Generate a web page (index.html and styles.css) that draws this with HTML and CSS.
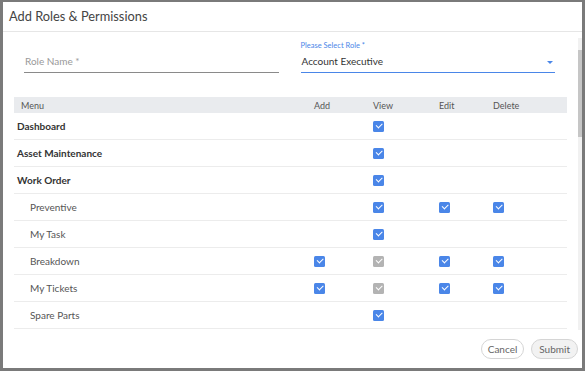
FILE: index.html
```html
<!DOCTYPE html>
<html>
<head>
<meta charset="utf-8">
<link rel="stylesheet" href="styles.css">
</head>
<body>
<div class="dialog">
  <div class="head">Add Roles &amp; Permissions</div>
  <div class="body">
    <div class="content">
      <div class="fields">
        <div class="field">
          <div class="float-label">&nbsp;</div>
          <div class="input">Role Name *</div>
        </div>
        <div class="field select">
          <div class="float-label blue">Please Select Role *</div>
          <div class="input value">Account Executive<span class="arrow"></span></div>
        </div>
      </div>
      <div class="table">
        <div class="row header">
          <div class="c menu">Menu</div><div class="c">Add</div><div class="c">View</div><div class="c">Edit</div><div class="c">Delete</div>
        </div>
        <div class="row">
          <div class="c menu strong">Dashboard</div><div class="c"></div><div class="c"><span class="cb"></span></div><div class="c"></div><div class="c"></div>
        </div>
        <div class="row">
          <div class="c menu strong">Asset Maintenance</div><div class="c"></div><div class="c"><span class="cb"></span></div><div class="c"></div><div class="c"></div>
        </div>
        <div class="row">
          <div class="c menu strong">Work Order</div><div class="c"></div><div class="c"><span class="cb"></span></div><div class="c"></div><div class="c"></div>
        </div>
        <div class="row">
          <div class="c menu sub">Preventive</div><div class="c"></div><div class="c"><span class="cb"></span></div><div class="c"><span class="cb"></span></div><div class="c"><span class="cb"></span></div>
        </div>
        <div class="row">
          <div class="c menu sub">My Task</div><div class="c"></div><div class="c"><span class="cb"></span></div><div class="c"></div><div class="c"></div>
        </div>
        <div class="row">
          <div class="c menu sub">Breakdown</div><div class="c"><span class="cb"></span></div><div class="c"><span class="cb off"></span></div><div class="c"><span class="cb"></span></div><div class="c"><span class="cb"></span></div>
        </div>
        <div class="row">
          <div class="c menu sub">My Tickets</div><div class="c"><span class="cb"></span></div><div class="c"><span class="cb off"></span></div><div class="c"><span class="cb"></span></div><div class="c"><span class="cb"></span></div>
        </div>
        <div class="row">
          <div class="c menu sub">Spare Parts</div><div class="c"></div><div class="c"><span class="cb"></span></div><div class="c"></div><div class="c"></div>
        </div>
      </div>
    </div>
    <div class="scroll"><div class="thumb"></div></div>
  </div>
  <div class="foot">
    <button class="btn">Cancel</button>
    <button class="btn submit">Submit</button>
  </div>
</div>
</body>
</html>
```

FILE: styles.css
```css
* { box-sizing: border-box; }
html, body { margin: 0; padding: 0; background: #fff; }
body { font-family: Lato, "Open Sans", sans-serif; color: #333; }

.dialog {
  width: 585px;
  height: 371px;
  border-style: solid;
  border-color: #7a7a7a;
  border-width: 2px 3px 3px 3px;
  display: flex;
  flex-direction: column;
  background: #fff;
}

.head {
  height: 30px;
  flex: none;
  padding: 0 0 0 6px;
  font-size: 12.8px;
  color: #444;
  line-height: 28px;
  border-bottom: 1px solid #e6e6e6;
}

.body {
  flex: 1;
  display: flex;
  min-height: 0;
}

.content {
  flex: 1;
  padding: 0 11px 0 11px;
}

.fields {
  display: flex;
  gap: 22px;
  padding: 9px 12px 0 10px;
}
.field { flex: 1; }
.float-label {
  font-size: 7.5px;
  height: 10px;
  line-height: 10px;
  color: #999;
}
.float-label.blue { color: #4a86e8; }
.input {
  position: relative;
  height: 22px;
  line-height: 20px;
  font-size: 10px;
  color: #999;
  border-bottom: 1px solid #8a8a8a;
  padding-left: 1px;
}
.input.value {
  color: #333;
  border-bottom: 1.5px solid #4a86e8;
}
.arrow {
  position: absolute;
  right: 2px;
  top: 10px;
  width: 0;
  height: 0;
  border-left: 3px solid transparent;
  border-right: 3px solid transparent;
  border-top: 3px solid #4a86e8;
}

.table { margin-top: 24px; }
.row {
  display: grid;
  grid-template-columns: 299px 59px 66px 54px 74px;
  height: 27px;
  border-bottom: 1px solid #ececec;
  align-items: center;
  font-size: 10px;
}
.row.header {
  height: 16px;
  background: #e9ebee;
  border-bottom: none;
  font-size: 9px;
  color: #555;
}
.c { padding-left: 1px; display: flex; align-items: center; }
.c.menu { padding-left: 6px; }
.header .c.menu { padding-left: 7px; }
.c.menu.strong { font-weight: 700; color: #333; padding-left: 3px; }
.c.menu.sub { padding-left: 16px; color: #555; }

.cb {
  display: inline-block;
  width: 11px;
  height: 11px;
  border-radius: 1.5px;
  background: #4a86e8;
  position: relative;
}
.cb.off { background: #b3b3b3; }
.cb::after {
  content: "";
  position: absolute;
  left: 3px;
  top: 2.5px;
  width: 5px;
  height: 2.5px;
  border-left: 1.2px solid #fff;
  border-bottom: 1.2px solid #fff;
  transform: rotate(-45deg);
}

.scroll {
  width: 4px;
  margin: 6px 0 0 0;
  background: #f1f1f1;
  flex: none;
}
.thumb {
  margin-top: 12px;
  height: 87px;
  background: #c6c6c6;
}

.foot {
  height: 38px;
  flex: none;
  display: flex;
  justify-content: flex-end;
  align-items: center;
  gap: 7px;
  padding: 0 4px 0 0;
}
.btn {
  height: 20px;
  border-radius: 10px;
  border: 1px solid #d5d5d5;
  background: #fff;
  font-family: Lato, "Open Sans", sans-serif;
  font-size: 10px;
  color: #666;
  padding: 0 6px;
}
.btn.submit { background: #f2f2f2; padding: 0 7px; }
```
